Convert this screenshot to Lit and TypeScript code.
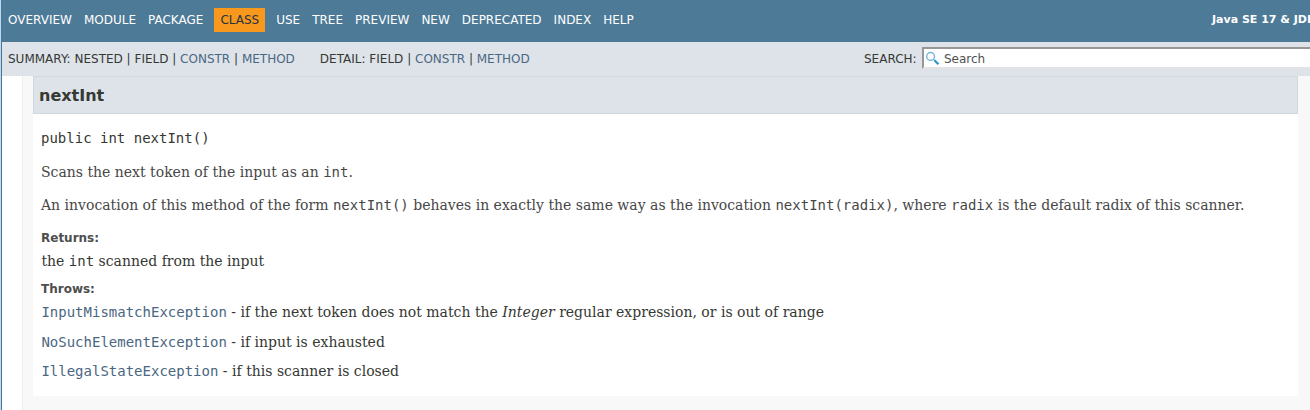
import { LitElement, html, css } from "lit";
import { customElement } from "lit/decorators.js";

const LINKS_BEFORE = ["OVERVIEW", "MODULE", "PACKAGE"];
const LINKS_AFTER = ["USE", "TREE", "PREVIEW", "NEW", "DEPRECATED", "INDEX", "HELP"];

@customElement("doc-nav")
class DocNav extends LitElement {
  static styles = css`
    :host { display: block; font: 12px/14px "DejaVu Sans", sans-serif; color: #353833; white-space: nowrap; }
    .top { display: flex; align-items: flex-start; height: 42px; box-sizing: border-box; padding: 8px 0 0 6px; background: #4d7a97; color: #fff; overflow: hidden; }
    .item { margin-right: 12px; padding-top: 5px; }
    .current { margin: 0 11px 0 -1px; padding: 5px 6px; background: #f8981d; color: #253441; }
    .about { margin-left: auto; padding-top: 5px; width: 98px; font-size: 11px; font-weight: bold; }
    .sub { display: flex; height: 34px; background: #dee3e9; overflow: hidden; }
    .group { padding: 10px 0 0 6px; }
    .detail { padding-left: 25px; }
    .link { color: #4a6782; }
    .search { display: flex; margin-left: auto; width: 446px; }
    .label { padding-top: 10px; width: 58px; flex: none; }
    .field { display: flex; width: 420px; flex: none; height: 22px; box-sizing: border-box; margin-top: 5px; border: 2px solid #e3e3e3; border-top-color: #979797; border-left-color: #979797; background: #fff; color: #505050; }
    .icon { display: block; width: 14px; height: 14px; margin: 2px 0 0 1px; }
    .hint { padding: 3px 0 0 5px; }
  `;
  render() {
    return html`
      <nav class="top">
        ${LINKS_BEFORE.map((t) => html`<span class="item">${t}</span>`)}
        <span class="current">CLASS</span>
        ${LINKS_AFTER.map((t) => html`<span class="item">${t}</span>`)}
        <span class="about">Java SE 17 &amp; JDK 17</span>
      </nav>
      <div class="sub">
        <div class="group">SUMMARY: NESTED | FIELD | <span class="link">CONSTR</span> | <span class="link">METHOD</span></div>
        <div class="group detail">DETAIL: FIELD | <span class="link">CONSTR</span> | <span class="link">METHOD</span></div>
        <div class="search">
          <span class="label">SEARCH:</span>
          <div class="field">
            <svg class="icon" viewBox="0 0 14 14" fill="none">
              <circle cx="5.6" cy="5.4" r="3.9" stroke="#75b5d8" stroke-width="1.4" />
              <path d="M8.4 8.2 L9.8 9.6" stroke="#75b5d8" stroke-width="1.2" />
              <path d="M9.4 9.2 L13.4 13.2" stroke="#2c95cc" stroke-width="2.2" />
            </svg>
            <span class="hint">Search</span>
          </div>
        </div>
      </div>
    `;
  }
}

@customElement("method-detail")
class MethodDetail extends LitElement {
  static styles = css`
    :host { display: block; box-sizing: border-box; height: 320px; background: #fff; font: 14px/20px "DejaVu Serif", serif; color: #353833; white-space: nowrap; }
    .title { margin: 0; box-sizing: border-box; height: 38px; padding: 9px 0 0 5px; border: 1px solid #d0d9e0; background: #dee3e9; font: bold 16px/20px "DejaVu Sans", sans-serif; }
    .body { padding: 14px 0 0 8px; }
    code { font: 14px "DejaVu Sans Mono", monospace; line-height: 0; }
    .signature { height: 20px; font-family: "DejaVu Sans Mono", monospace; }
    p { margin: 13px 0 0; color: #474747; }
    .signature + p { margin-top: 14px; }
    dl { margin: 0; }
    dt { font: bold 12px/14px "DejaVu Sans", sans-serif; color: #4e4e4e; margin-top: 11px; }
    .returns { margin-top: 16px; }
    dd { margin: 6px 0 0; padding-left: 0.4px; }
    .next { margin-top: 10px; }
    .last { margin-top: 9px; }
    .link { color: #4a6782; }
  `;
  render() {
    return html`
      <h3 class="title">nextInt</h3>
      <div class="body">
        <div class="signature">public int nextInt()</div>
        <p>Scans the next token of the input as an <code>int</code>.</p>
        <p>An invocation of this method of the form <code>nextInt()</code> behaves in exactly the same way as the invocation <code>nextInt(radix)</code>, where <code>radix</code> is the default radix of this scanner.</p>
        <dl>
          <dt class="returns">Returns:</dt>
          <dd>the <code>int</code> scanned from the input</dd>
          <dt>Throws:</dt>
          <dd><code class="link">InputMismatchException</code> - if the next token does not match the <i>Integer</i> regular expression, or is out of range</dd>
          <dd class="next"><code class="link">NoSuchElementException</code> - if input is exhausted</dd>
          <dd class="last"><code class="link">IllegalStateException</code> - if this scanner is closed</dd>
        </dl>
      </div>
    `;
  }
}

@customElement("app-root")
class AppRoot extends LitElement {
  static styles = css`
    :host { display: block; box-sizing: border-box; width: 1310px; height: 410px; overflow: hidden; border-left: 1px solid #d6d2ce; background: #fff; }
    .page { box-sizing: border-box; height: 410px; border-left: 1px solid #2f7cba; }
    .panel { box-sizing: border-box; height: 334px; margin-left: 20px; padding: 0 12px 0 10px; border-left: 1px solid #ededed; background: #f8f8f8; }
  `;
  render() {
    return html`
      <div class="page">
        <doc-nav></doc-nav>
        <div class="panel"><method-detail></method-detail></div>
      </div>
    `;
  }
}
